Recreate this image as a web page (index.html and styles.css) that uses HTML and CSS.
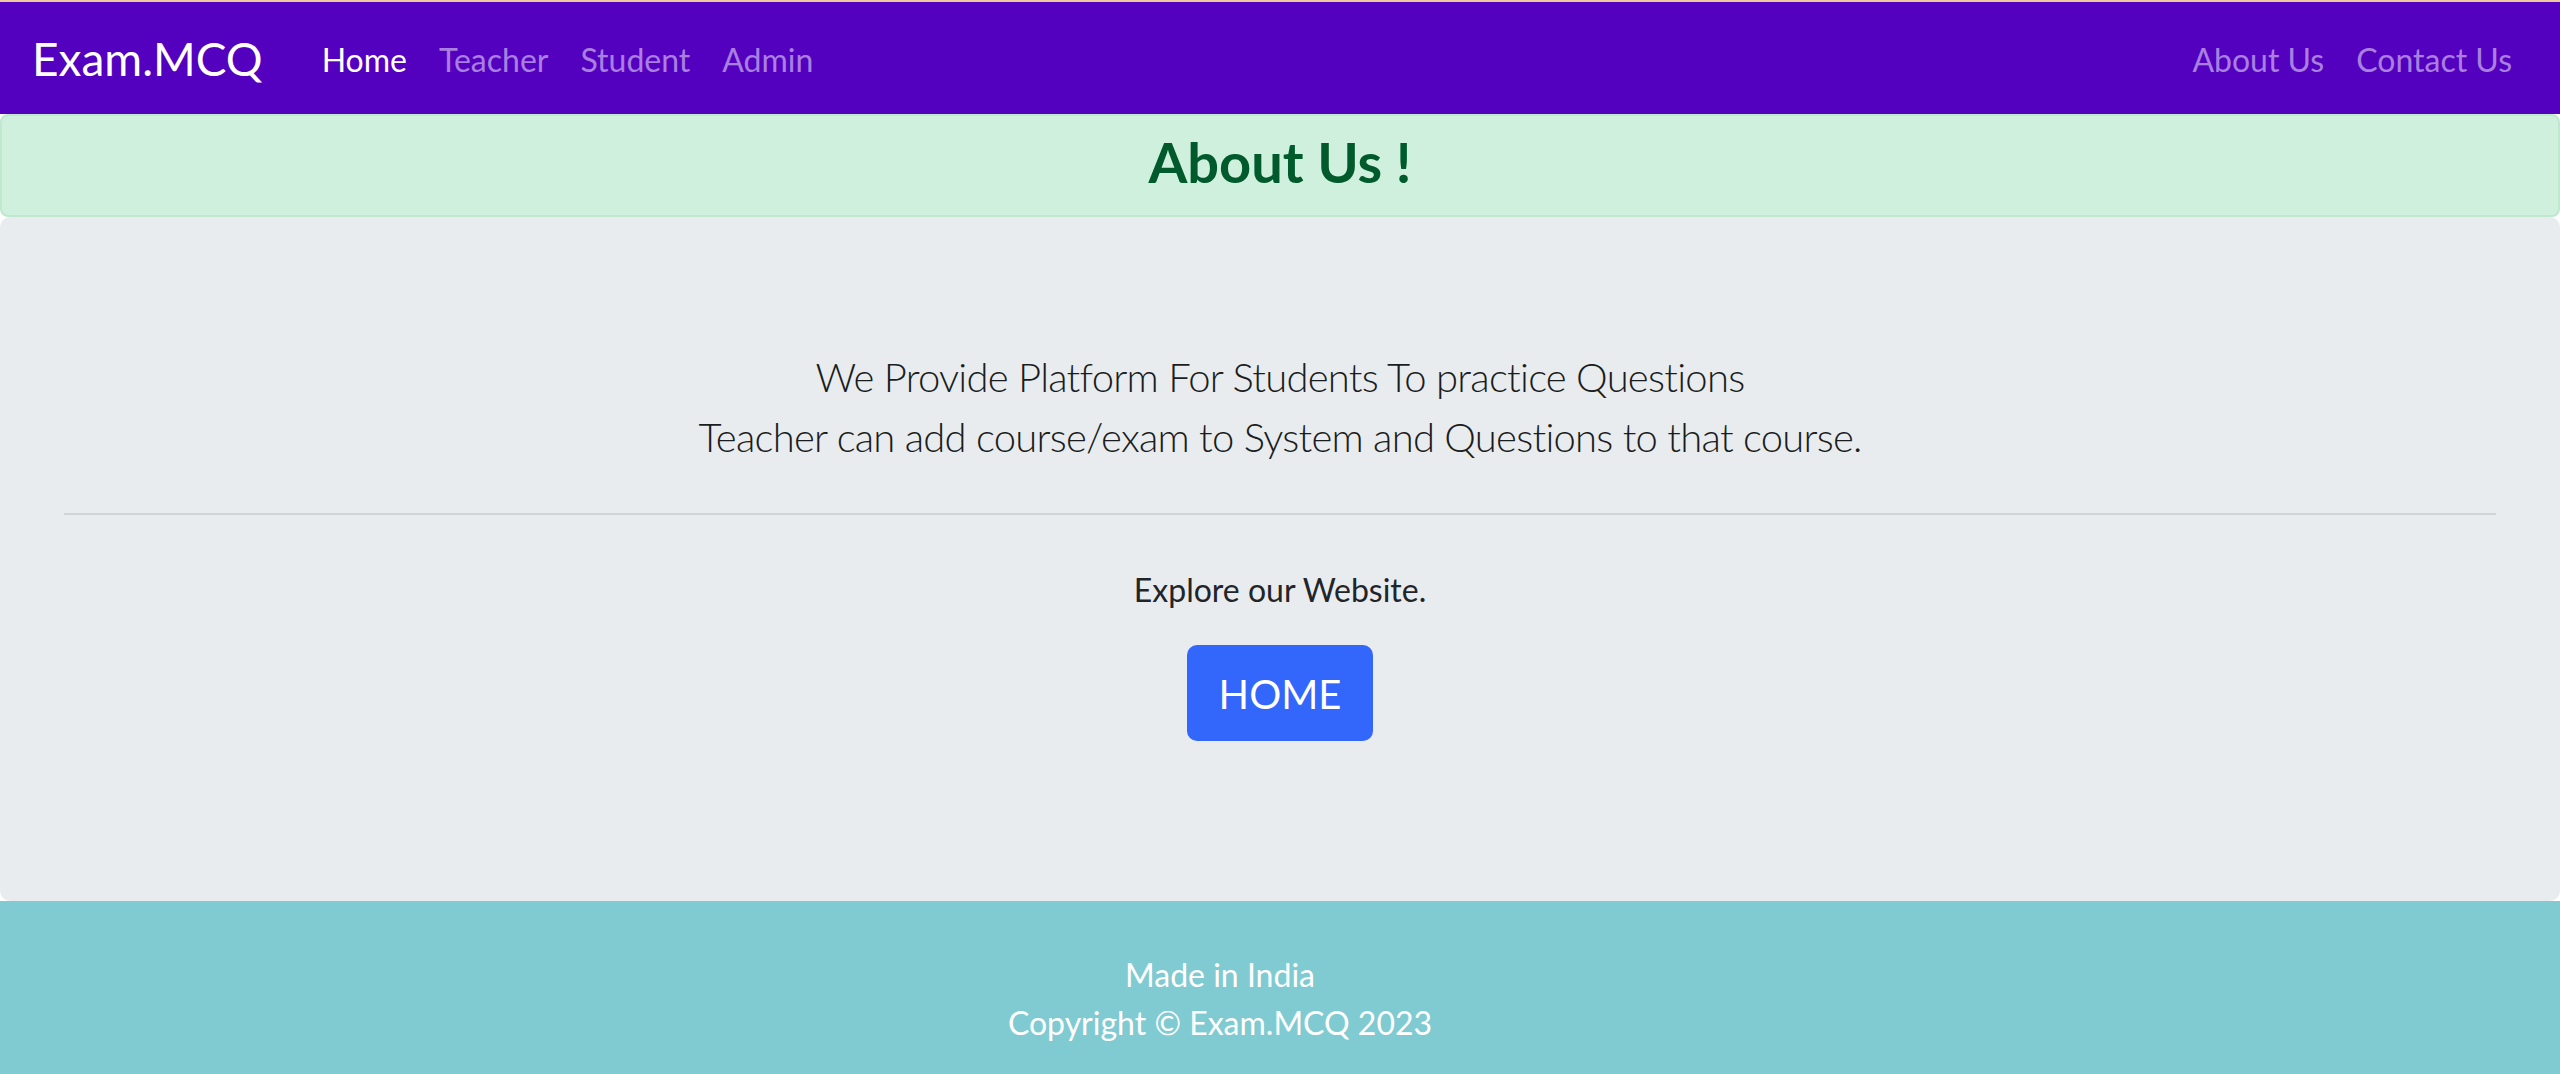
FILE: index.html
```html
<!DOCTYPE html>
<html lang="en">
<head>
<meta charset="utf-8">
<title>Exam.MCQ - About Us</title>
<link rel="stylesheet" href="styles.css">
</head>
<body>
  <nav class="navbar">
    <a class="brand" href="#">Exam.MCQ</a>
    <ul class="nav nav-main">
      <li><a class="nav-link active" href="#">Home</a></li>
      <li><a class="nav-link" href="#">Teacher</a></li>
      <li><a class="nav-link" href="#">Student</a></li>
      <li><a class="nav-link" href="#">Admin</a></li>
    </ul>
    <ul class="nav nav-side">
      <li><a class="nav-link" href="#">About Us</a></li>
      <li><a class="nav-link" href="#">Contact Us</a></li>
    </ul>
  </nav>

  <div class="alert">
    <h3 class="alert-title">About Us !</h3>
  </div>

  <div class="jumbotron">
    <p class="lead">We Provide Platform For Students To practice Questions<br>Teacher can add course/exam to System and Questions to that course.</p>
    <hr class="divider">
    <p class="explore">Explore our Website.</p>
    <p class="actions"><a class="btn" href="#">HOME</a></p>
  </div>

  <footer class="footer">
    <p class="footer-line">Made in India</p>
    <p class="footer-line">Copyright &copy; Exam.MCQ 2023</p>
  </footer>
</body>
</html>
```
FILE: styles.css
```css
* { box-sizing: border-box; }

html, body { margin: 0; padding: 0; }

body {
  font-family: "Lato", "Open Sans", "Liberation Sans", sans-serif;
  font-size: 32px;
  line-height: 48px;
  color: #212529;
  background: #ffffff;
  border-top: 2px solid #ecc99c;
}

.navbar {
  display: flex;
  align-items: center;
  height: 112px;
  padding: 0 32px;
  background: #5400bf;
}

.brand {
  color: #ffffff;
  text-decoration: none;
  font-size: 46px;
  line-height: 72px;
  margin-right: 43px;
  padding-top: 2px;
}

.nav {
  display: flex;
  list-style: none;
  margin: 0;
  padding: 0;
}

.nav-side { margin-left: auto; }

.nav-link {
  display: block;
  padding: 4px 16px 0;
  color: rgba(255, 255, 255, 0.5);
  text-decoration: none;
  font-size: 32px;
  line-height: 48px;
}

.nav-link.active { color: #ffffff; }

.alert {
  height: 103px;
  background: #cff0dd;
  border: 2px solid #bfe8cf;
  border-radius: 8px;
  text-align: center;
  padding-top: 13px;
}

.alert-title {
  margin: 0;
  font-size: 56px;
  line-height: 65px;
  font-weight: 700;
  color: #005a2c;
}

.jumbotron {
  height: 684px;
  background: #e9ecef;
  border-radius: 10px;
  padding: 130px 64px 0;
  text-align: center;
}

.lead {
  margin: 0 0 46px;
  font-size: 40px;
  line-height: 60px;
  font-weight: 300;
  letter-spacing: -0.75px;
  color: #1a1d20;
}

.divider {
  margin: 0 0 51px;
  border: 0;
  border-top: 2px solid rgba(0, 0, 0, 0.1);
}

.explore {
  margin: 0 0 31px;
}

.actions { margin: 0; }

.btn {
  display: inline-block;
  height: 96px;
  padding: 2px 32px 0;
  background: #3366fb;
  color: #ffffff;
  border-radius: 10px;
  font-size: 40px;
  line-height: 94px;
  text-decoration: none;
}

.footer {
  height: 173px;
  background: #80cbd2;
  color: #ffffff;
  text-align: center;
  padding: 50px 120px 0 0;
}

.footer-line { margin: 0; }
```
